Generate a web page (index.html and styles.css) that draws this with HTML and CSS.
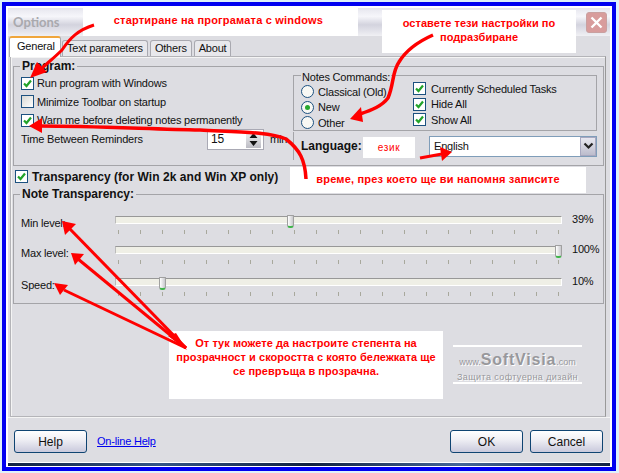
FILE: index.html
```html
<!DOCTYPE html>
<html lang="bg">
<head>
    <meta charset="UTF-8">
    <meta name="viewport" content="width=device-width, initial-scale=1.0">
    <title>Options</title>
    <link rel="stylesheet" href="styles.css">
</head>
<body>
    <svg class="defs" width="0" height="0">
        <symbol id="tick" viewBox="0 0 11 11">
            <path d="M2 5.5 L4.5 8 L9 2.5" fill="none" stroke="#22a32a" stroke-width="2.2"/>
        </symbol>
    </svg>

    <div class="frame">
        <div class="window">
            <div class="titlebar">
                <span class="title">Options</span>
                <span class="close">
                    <svg width="13" height="13" viewBox="0 0 13 13"><path d="M1.5 1.5 L11.5 11.5 M11.5 1.5 L1.5 11.5" stroke="#fff" stroke-width="2.4"/></svg>
                </span>
            </div>

            <div class="tabs">
                <div class="tab active">General</div>
                <div class="tab">Text parameters</div>
                <div class="tab">Others</div>
                <div class="tab">About</div>
            </div>

            <div class="pane">
                <fieldset class="group program">
                    <legend>Program:</legend>
                    <div class="program-grid">
                        <div class="options">
                            <div class="row"><span class="check on"><svg><use href="#tick"/></svg></span>Run program with Windows</div>
                            <div class="row"><span class="check"></span>Minimize Toolbar on startup</div>
                            <div class="row"><span class="check on"><svg><use href="#tick"/></svg></span>Warn me before deleting notes permanently</div>
                            <div class="row time">
                                <span class="time-label">Time Between Reminders</span>
                                <span class="spinner">
                                    <span>15</span>
                                    <span class="spin-btns">
                                        <svg width="15" height="17" viewBox="0 0 15 17"><path d="M7.5 2 L11.5 7 H3.5 Z M7.5 15 L3.5 10 H11.5 Z" fill="#111"/></svg>
                                    </span>
                                </span>
                                <span class="unit">min</span>
                            </div>
                        </div>

                        <div class="right-col">
                            <fieldset class="group notes-commands">
                                <legend>Notes Commands:</legend>
                                <div class="commands">
                                    <div class="radios">
                                        <div class="radio-row"><span class="radio"></span>Classical (Old)</div>
                                        <div class="radio-row"><span class="radio on"></span>New</div>
                                        <div class="radio-row"><span class="radio"></span>Other</div>
                                    </div>
                                    <div class="command-checks">
                                        <div class="radio-row"><span class="check on"><svg><use href="#tick"/></svg></span>Currently Scheduled Tasks</div>
                                        <div class="radio-row"><span class="check on"><svg><use href="#tick"/></svg></span>Hide All</div>
                                        <div class="radio-row"><span class="check on"><svg><use href="#tick"/></svg></span>Show All</div>
                                    </div>
                                </div>
                            </fieldset>
                            <div class="language">
                                <b>Language:</b>
                                <div class="combo">
                                    <span>English</span>
                                    <span class="combo-btn">
                                        <svg width="11" height="8" viewBox="0 0 11 8"><path d="M1.5 1.5 L5.5 5.5 L9.5 1.5" fill="none" stroke="#222" stroke-width="2.2"/></svg>
                                    </span>
                                </div>
                            </div>
                        </div>
                    </div>
                </fieldset>

                <div class="transparency">
                    <span class="check on"><svg><use href="#tick"/></svg></span>
                    <b>Transparency (for Win 2k and Win XP only)</b>
                </div>

                <fieldset class="group note-transparency">
                    <legend>Note Transparency:</legend>
                    <div class="levels">
                        <span class="level-label">Min level:</span>
                        <div class="slider"><div class="ticks"></div><div class="rail"><span class="thumb" style="left: 39%"></span></div></div>
                        <span class="level-value">39%</span>

                        <span class="level-label">Max level:</span>
                        <div class="slider"><div class="ticks"></div><div class="rail"><span class="thumb" style="left: 100%"></span></div></div>
                        <span class="level-value">100%</span>

                        <span class="level-label">Speed:</span>
                        <div class="slider"><div class="ticks"></div><div class="rail"><span class="thumb" style="left: 10%"></span></div></div>
                        <span class="level-value">10%</span>
                    </div>
                </fieldset>
            </div>

            <div class="footer">
                <button class="btn">Help</button>
                <a class="help-link" href="#">On-line Help</a>
                <div class="footer-right">
                    <button class="btn">OK</button>
                    <button class="btn">Cancel</button>
                </div>
            </div>
        </div>
        <div class="strip"></div>
    </div>

    <!-- annotations on top of the screenshot -->
    <div class="note note-startup">стартиране на програмата с windows</div>
    <div class="note note-defaults">оставете тези настройки по<br>подразбиране</div>
    <div class="note note-lang">език</div>
    <div class="note note-time">време, през което ще ви напомня записите</div>
    <div class="note note-levels">От тук можете да настроите степента на<br>прозрачност и скоростта с която бележката ще<br>се превръща в прозрачна.</div>
    <div class="watermark">
        <div class="wm-top"><small>www.</small>SoftVisia<small>.com</small></div>
        <div class="wm-sub">Защита софтуерна дизайн</div>
    </div>

    <svg class="arrows" width="619" height="473" viewBox="0 0 619 473">
        <g fill="none" stroke="#f00" stroke-width="3">
            <path d="M94 25 C78 30 70 38 62 50 C54 58 46 64 38 72"/>
            <path d="M306 179 C305 160 300 150 286 139 C270 132 240 132 200 130 C150 129 90 126 40 126" stroke-width="3.5"/>
            <path d="M433 35 C415 43 405 52 399 62 C392 72 394 84 388 98 C382 106 372 110 360 114" stroke-width="3.5"/>
            <path d="M420 158 L442 154"/>
            <path d="M186 348 L68 227"/>
            <path d="M186 348 L78 259"/>
            <path d="M186 348 L64 290"/>
        </g>
        <g fill="#f00">
            <polygon points="30,78 37,62 47,72"/>
            <polygon points="29,126 42,118 42,133"/>
            <polygon points="350,119 361,107 363,122"/>
            <polygon points="452,152 440,147 442,161"/>
            <polygon points="62,221 76,224 65,235"/>
            <polygon points="71,253 84,254 75,265"/>
            <polygon points="54,283 68,285 60,295"/>
            <polygon points="187,350 168,336 176,333"/>
        </g>
    </svg>
</body>
</html>
```

FILE: styles.css
```css
* {
    box-sizing: border-box;
}
body {
    margin: 0;
    background: #dff1fa;
    font-family: "Liberation Sans", Arial, sans-serif;
    font-size: 11px;
    letter-spacing: -0.2px;
    color: #111;
}
.defs {
    position: absolute;
}
.frame {
    width: 614px;
    height: 469px;
    margin: 2px;
    border: 4px solid #0000f0;
    background: #fff;
    padding: 2px 2px 0;
    display: flex;
    flex-direction: column;
}
.window {
    width: 602px;
    height: 454px;
    background: #dddde2;
    display: flex;
    flex-direction: column;
}
.strip {
    height: 3px;
    margin-top: 1px;
    background: linear-gradient(to right, #112244, #335588, #102040, #446699, #112244);
}

/* title bar */
.titlebar {
    height: 28px;
    flex: none;
    display: flex;
    align-items: center;
    justify-content: space-between;
    padding: 0 3px 0 5px;
    background: linear-gradient(to bottom, #e6e6ee 0, #f6f6fa 30%, #d3d3de 60%, #f0f0f4 100%);
}
.title {
    font-family: Lato, Arial, sans-serif;
    font-weight: bold;
    font-size: 13px;
    letter-spacing: 0;
    color: #a9a9ae;
}
.close {
    width: 21px;
    height: 21px;
    border: 1px solid #c9a0a0;
    border-radius: 3px;
    background: #d89c9c;
    display: flex;
    align-items: center;
    justify-content: center;
}

/* tabs */
.tabs {
    height: 20px;
    flex: none;
    display: flex;
    align-items: flex-end;
    gap: 2px;
    padding-left: 1px;
}
.tab {
    height: 16px;
    padding: 0 4px;
    line-height: 15px;
    border: 1px solid #a9a9b0;
    border-bottom: none;
    border-radius: 3px 3px 0 0;
    background: #e8e8ec;
    white-space: nowrap;
}
.tab.active {
    height: 21px;
    width: 52px;
    margin-right: -1px;
    padding: 0 7px;
    line-height: 17px;
    background: #fff;
    border-top: 2px solid #f0a63c;
    position: relative;
    top: 1px;
}

/* main pane */
.pane {
    height: 361px;
    flex: none;
    margin: 0 4px 0 2px;
    padding: 2px 1px 0 2px;
    border: 1px solid #b4b4b8;
    border-right-color: #999;
    box-shadow: inset 1px 1px 0 #f4f4f4;
}
.group {
    margin: 0;
    padding: 0;
    min-width: 0;
    border: 1px solid #a4a4a8;
}
.group legend {
    margin-left: 6px;
    padding: 0 2px;
    line-height: 14px;
    font-weight: bold;
    font-size: 12px;
    letter-spacing: 0;
}
.program {
    height: 107px;
}
.program-grid {
    display: grid;
    grid-template-columns: 279px 310px;
}
.options {
    padding: 1px 0 0 7px;
}
.row {
    height: 18.6px;
    display: flex;
    align-items: center;
    gap: 3px;
    white-space: nowrap;
}
.check {
    width: 13px;
    height: 13px;
    flex: none;
    border: 1px solid #1c5180;
    background: linear-gradient(135deg, #d8d8d4, #fff);
}
.check svg {
    width: 11px;
    height: 11px;
    display: block;
}
.check.on {
    background: #fff;
}
.time {
    height: 21px;
    margin-top: -1px;
}
.time-label {
    width: 183px;
}
.spinner {
    width: 57px;
    height: 21px;
    padding: 0 2px 0 3px;
    font-size: 12px;
    border: 1px solid #a9a9b4;
    background: #fff;
    display: flex;
    align-items: center;
    justify-content: space-between;
}
.spin-btns {
    height: 17px;
    background: linear-gradient(to bottom, #f4f4f4, #bcbcc4);
    display: block;
}
.spin-btns svg {
    display: block;
}
.unit {
    margin-left: 3px;
}

/* notes commands + language */
.right-col {
    margin-top: -7px;
}
.notes-commands {
    width: 304px;
    height: 65px;
}
.notes-commands legend {
    font-weight: normal;
    font-size: 11px;
    letter-spacing: -0.2px;
    margin-left: 7px;
    padding: 4px 1px 0 1px;
    line-height: 14px;
}
.commands {
    display: grid;
    grid-template-columns: 112px 1fr;
    padding-left: 7px;
}
.command-checks {
    margin-top: -3px;
}
.radio-row {
    height: 15.6px;
    display: flex;
    align-items: center;
    gap: 4px;
    white-space: nowrap;
}
.command-checks .radio-row {
    gap: 5px;
}
.radio {
    width: 13px;
    height: 13px;
    flex: none;
    border: 1px solid #1c5180;
    border-radius: 50%;
    background: #f8f8f4;
    display: flex;
    align-items: center;
    justify-content: center;
}
.radio.on::after {
    content: "";
    width: 5px;
    height: 5px;
    border-radius: 50%;
    background: #27a82e;
}
.language {
    height: 28px;
    margin-top: 1px;
    padding: 0 7px;
    border-left: 1px solid #a4a4a8;
    display: flex;
    align-items: center;
    justify-content: space-between;
    width: 304px;
}
.language b {
    font-size: 12px;
    letter-spacing: 0;
}
.combo {
    width: 168px;
    height: 21px;
    margin-right: -7px;
    border: 1px solid #7f9db9;
    background: #fff;
    padding-left: 4px;
    display: flex;
    align-items: center;
    justify-content: space-between;
}
.combo-btn {
    width: 16px;
    height: 19px;
    background: linear-gradient(to bottom, #e8e8f0, #bcbccc);
    border: 1px solid #a8a8c0;
    display: flex;
    align-items: center;
    justify-content: center;
}

/* transparency */
.transparency {
    height: 21px;
    display: flex;
    align-items: center;
    gap: 4px;
    padding-left: 2px;
    white-space: nowrap;
}
.transparency b {
    font-size: 12px;
    letter-spacing: 0.05px;
}
.note-transparency {
    height: 117px;
}
.levels {
    display: grid;
    grid-template-columns: 94px 447px 1fr;
    grid-template-rows: 30px 32px 30px;
    padding: 15px 0 0 7px;
}
.level-label {
    line-height: 14px;
}
.level-value {
    line-height: 14px;
    margin: -4px 0 0 10px;
}
.slider {
    height: 8px;
    position: relative;
    border-top: 1px solid #989898;
    border-left: 1px solid #bbb;
    border-bottom: 1px solid #fff;
    border-right: 1px solid #fff;
    background: #efefe6;
}
.ticks {
    position: absolute;
    left: 2px;
    top: 13px;
    width: 441px;
    height: 4px;
    background: repeating-linear-gradient(to right, #a8a89c 0, #a8a89c 1px, transparent 1px, transparent 22px);
}
.rail {
    position: absolute;
    left: 0;
    right: 5px;
    top: 0;
}
/* the slider's thumb; left comes from the value */
.thumb {
    position: absolute;
    top: -2px;
    width: 7px;
    height: 13px;
    margin-left: -1px;
    background: linear-gradient(to right, #fff, #c8c8cc);
    border: 1px solid #a0a0a0;
    border-bottom: 2px solid #3fb54a;
    border-radius: 1px 1px 3px 3px;
}

/* footer */
.footer {
    flex: 1;
    display: flex;
    align-items: flex-start;
    padding: 12px 7px 0 6px;
    border-top: 1px solid #f4f4f4;
}
.btn {
    width: 73px;
    height: 23px;
    padding: 0;
    font-family: inherit;
    font-size: 12px;
    color: #111;
    border: 1px solid #0f4472;
    border-radius: 3px;
    background: linear-gradient(to bottom, #fff 0, #f0f0f5 40%, #c9c9dc 100%);
}
.help-link {
    margin: 5px 0 0 10px;
    color: #0000ee;
}
.footer-right {
    margin-left: auto;
    display: flex;
    gap: 7px;
}

/* annotations */
.note {
    position: absolute;
    background: #fff;
    color: #f00;
    font-weight: bold;
    font-size: 11px;
    letter-spacing: 0;
    text-align: center;
    white-space: nowrap;
}
.note-startup {
    left: 83px;
    top: 8px;
    width: 275px;
    height: 28px;
    padding: 5px 4px 0 0;
    line-height: 14px;
    letter-spacing: 0.2px;
}
.note-defaults {
    left: 382px;
    top: 10px;
    width: 194px;
    height: 43px;
    padding-top: 6px;
    line-height: 14px;
    letter-spacing: 0.05px;
}
.note-lang {
    left: 363px;
    top: 137px;
    width: 52px;
    height: 21px;
    font-weight: normal;
    font-size: 10px;
    line-height: 21px;
    letter-spacing: 0.6px;
}
.note-time {
    left: 290px;
    top: 167px;
    width: 296px;
    height: 26px;
    line-height: 24px;
    letter-spacing: 0.2px;
}
.note-levels {
    left: 169px;
    top: 331px;
    width: 274px;
    height: 68px;
    padding-top: 5px;
    line-height: 14.2px;
    letter-spacing: 0.05px;
}
.watermark {
    position: absolute;
    left: 453px;
    top: 345px;
    width: 129px;
    height: 39px;
    padding-top: 3px;
    border-top: 2px solid #fff;
    border-bottom: 2px solid #fff;
    color: #98989c;
    text-align: center;
    white-space: nowrap;
    letter-spacing: 0;
    text-shadow: 1px 1px 0 #fff;
}
.wm-top {
    font-size: 16px;
    font-weight: bold;
    line-height: 20px;
    letter-spacing: 0.8px;
}
.wm-top small {
    font-size: 9px;
    font-weight: normal;
    letter-spacing: 0;
}
.wm-sub {
    font-size: 9px;
    line-height: 11px;
    letter-spacing: 0.4px;
}
.arrows {
    position: absolute;
    left: 0;
    top: 0;
    pointer-events: none;
}
```
